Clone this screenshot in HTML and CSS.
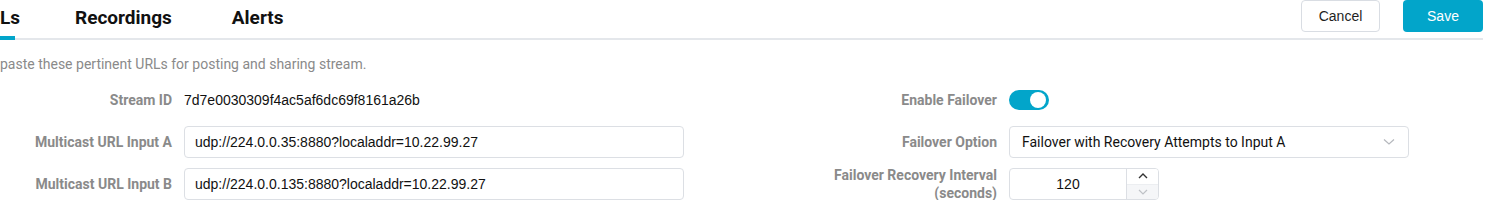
FILE: index.html
```html
<!DOCTYPE html>
<html lang="en">
<head>
    <meta charset="UTF-8">
    <title>Stream Settings</title>
    <link rel="stylesheet" href="styles.css">
</head>
<body>
    <div class="page">
        <div class="tab-bar">
            <div class="tabs">
                <span class="tab active">Ls</span>
                <span class="tab">Recordings</span>
                <span class="tab">Alerts</span>
            </div>
            <div class="actions">
                <button class="btn btn-cancel">Cancel</button>
                <button class="btn btn-save">Save</button>
            </div>
        </div>

        <p class="description">paste these pertinent URLs for posting and sharing stream.</p>

        <div class="form-grid">
            <label class="field-label row-first">Stream ID</label>
            <span class="field-value row-first">7d7e0030309f4ac5af6dc69f8161a26b</span>
            <span class="spacer"></span>
            <label class="field-label row-first">Enable Failover</label>
            <div class="row-first">
                <span class="toggle"><span class="knob"></span></span>
            </div>

            <label class="field-label">Multicast URL Input A</label>
            <input class="text-input" type="text" value="udp://224.0.0.35:8880?localaddr=10.22.99.27">
            <span class="spacer"></span>
            <label class="field-label">Failover Option</label>
            <div class="select">
                <span>Failover with Recovery Attempts to Input A</span>
                <svg class="chevron" width="12" height="8" viewBox="0 0 12 8">
                    <polyline points="1,1.5 6,6 11,1.5" fill="none" stroke="#b5b8bd" stroke-width="1.2"/>
                </svg>
            </div>

            <label class="field-label">Multicast URL Input B</label>
            <input class="text-input" type="text" value="udp://224.0.0.135:8880?localaddr=10.22.99.27">
            <span class="spacer"></span>
            <label class="field-label">Failover Recovery Interval (seconds)</label>
            <div>
                <div class="number-input">
                    <span class="number-value">120</span>
                    <div class="spinner">
                        <span class="spin spin-up">
                            <svg width="10" height="6" viewBox="0 0 10 6">
                                <polyline points="1,5 5,1 9,5" fill="none" stroke="#333" stroke-width="1.4"/>
                            </svg>
                        </span>
                        <span class="spin spin-down">
                            <svg width="10" height="6" viewBox="0 0 10 6">
                                <polyline points="1,1 5,5 9,1" fill="none" stroke="#bfc2c7" stroke-width="1.2"/>
                            </svg>
                        </span>
                    </div>
                </div>
            </div>
        </div>
    </div>
</body>
</html>
```

FILE: styles.css
```css
:root {
    --brand-blue: #02a5ca;
    --line-gray: #e4e7eb;
    --border-gray: #dcdfe4;
    --label-gray: #8a8a8a;
    --text-dark: #1f1f1f;
}

* {
    margin: 0;
    padding: 0;
    box-sizing: border-box;
}

body {
    background: #fff;
    font-family: Roboto, "Liberation Sans", sans-serif;
    color: var(--text-dark);
    overflow: hidden;
}

.page {
    width: 1483px;
}

.tab-bar {
    display: flex;
    justify-content: space-between;
    align-items: flex-start;
    height: 40px;
    border-bottom: 2px solid var(--line-gray);
}

.tabs {
    display: flex;
    gap: 60px;
}

.tab {
    font-size: 19px;
    font-weight: 700;
    color: #111;
    height: 40px;
    line-height: 36px;
    border-bottom: 4px solid transparent;
    white-space: nowrap;
}

.tab.active {
    width: 15px;
    border-bottom-color: var(--brand-blue);
}

.actions {
    display: flex;
    gap: 23px;
}

.btn {
    height: 32px;
    width: 80px;
    border-radius: 4px;
    font-family: "Liberation Sans", Arial, sans-serif;
    font-size: 14px;
    cursor: pointer;
}

.btn-cancel {
    width: 79px;
    background: #fff;
    border: 1px solid #d9dde3;
    color: var(--text-dark);
}

.btn-save {
    background: var(--brand-blue);
    border: none;
    color: #fff;
}

.description {
    margin-top: 14px;
    font-size: 14px;
    line-height: 20px;
    color: var(--label-gray);
}

.form-grid {
    display: grid;
    grid-template-columns: 172px 500px 117px 172px 400px;
    grid-template-rows: 26px 32px 32px;
    column-gap: 12px;
    row-gap: 10px;
    align-items: center;
    margin-top: 16px;
}

.row-first {
    align-self: start;
}

.field-label {
    text-align: right;
    font-size: 14px;
    font-weight: 700;
    line-height: 18px;
    color: var(--label-gray);
}

.field-label.row-first {
    line-height: 20px;
}

.field-value {
    font-family: "Liberation Sans", Arial, sans-serif;
    font-size: 14px;
    line-height: 20px;
    color: #111;
}

.toggle {
    display: flex;
    justify-content: flex-end;
    align-items: center;
    width: 40px;
    height: 20px;
    padding: 2px 3px;
    border-radius: 10px;
    background: var(--brand-blue);
}

.knob {
    width: 16px;
    height: 16px;
    border-radius: 50%;
    background: #fff;
}

.text-input {
    height: 32px;
    width: 100%;
    padding: 0 10px;
    border: 1px solid var(--border-gray);
    border-radius: 4px;
    font-family: "Liberation Sans", Arial, sans-serif;
    font-size: 14px;
    color: #111;
    outline: none;
}

.select {
    display: flex;
    justify-content: space-between;
    align-items: center;
    height: 32px;
    padding: 0 13px 0 12px;
    border: 1px solid var(--border-gray);
    border-radius: 4px;
    font-size: 14px;
    color: #111;
}

.number-input {
    display: flex;
    width: 150px;
    height: 32px;
    border: 1px solid var(--border-gray);
    border-radius: 4px;
    overflow: hidden;
}

.number-value {
    flex: 1;
    text-align: center;
    line-height: 30px;
    font-family: "Liberation Sans", Arial, sans-serif;
    font-size: 14px;
    color: #111;
}

.spinner {
    display: flex;
    flex-direction: column;
    width: 32px;
    border-left: 1px solid var(--border-gray);
}

.spin {
    flex: 1;
    display: flex;
    justify-content: center;
    align-items: center;
}

.spin-up {
    background: #fff;
    border-bottom: 1px solid #eceef1;
}

.spin-down {
    background: #f5f6f8;
}
```
